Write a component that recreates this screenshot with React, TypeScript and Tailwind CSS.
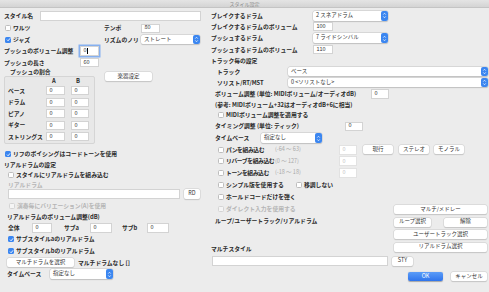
import clsx from "clsx";
import type { ReactNode } from "react";

const FONT = '"Noto Sans CJK JP", "Noto Sans", sans-serif';

function L({ children, dim, className }: { children: ReactNode; dim?: boolean; className?: string }) {
  return (
    <span
      className={clsx(
        "text-[5.8px] leading-none font-semibold whitespace-nowrap",
        dim ? "text-[#b5b5b5]" : "text-[#2a2a2a]",
        className
      )}
    >
      {children}
    </span>
  );
}

function Check({ on, dim }: { on?: boolean; dim?: boolean }) {
  return (
    <span
      className={clsx(
        "w-[6px] h-[6px] rounded-[1.5px] flex items-center justify-center shrink-0",
        on ? "bg-[#3b86f0]" : "bg-white border border-[#bdbdbd]",
        dim && "opacity-50"
      )}
    >
      {on && (
        <svg viewBox="0 0 10 10" className="w-[5px] h-[5px]">
          <path d="M2 5.3 L4.2 7.5 L8.2 2.6" stroke="white" strokeWidth="1.8" fill="none" />
        </svg>
      )}
    </span>
  );
}

function Field({ value, className, dim, focus }: { value?: string; className?: string; dim?: boolean; focus?: boolean }) {
  return (
    <div
      className={clsx(
        "h-[9px] bg-white border flex items-center px-[2.5px] text-[5.5px] leading-none shrink-0",
        dim ? "border-[#e2e2e2] text-[#c4c4c4]" : "border-[#d3d3d3] text-[#333]",
        focus && "shadow-[0_0_0_1.5px_#86b0ef]",
        className
      )}
    >
      {value}
      {focus && <span className="w-[0.6px] h-[6px] bg-black" />}
    </div>
  );
}

function Select({ value, className }: { value: string; className?: string }) {
  return (
    <div
      className={clsx(
        "h-[9px] bg-white rounded-[2px] shadow-[0_0_0_0.5px_#c8c8c8,0_0.5px_1px_rgba(0,0,0,0.2)] flex items-center text-[5.5px] leading-none text-[#333] shrink-0",
        className
      )}
    >
      <span className="pl-[3px] flex-1 whitespace-nowrap">{value}</span>
      <span className="w-[7px] h-full bg-[#3b86f0] rounded-[2px] flex items-center justify-center">
        <svg viewBox="0 0 7 10" className="w-[7px] h-[9px]">
          <path d="M2.1 4 L3.5 2.5 L4.9 4 M2.1 6 L3.5 7.5 L4.9 6" stroke="white" strokeWidth="0.8" fill="none" />
        </svg>
      </span>
    </div>
  );
}

function Btn({ children, className, primary }: { children: ReactNode; className?: string; primary?: boolean }) {
  return (
    <div
      className={clsx(
        "h-[9px] rounded-[2px] flex items-center justify-center text-[5.5px] leading-none whitespace-nowrap shrink-0",
        primary
          ? "bg-gradient-to-b from-[#5b9cf8] to-[#2f74ec] text-white shadow-[0_0.5px_1px_rgba(0,0,0,0.3)]"
          : "bg-white text-[#333] shadow-[0_0_0_0.5px_#cfcfcf,0_0.5px_1px_rgba(0,0,0,0.2)]",
        className
      )}
    >
      {children}
    </div>
  );
}

function CheckRow({ label, on, dim, tight }: { label: string; on?: boolean; dim?: boolean; tight?: boolean }) {
  return (
    <div className="flex items-center gap-[2px]">
      <Check on={on} dim={dim} />
      <L dim={dim} className={tight ? "tracking-[-0.4px]" : undefined}>
        {label}
      </L>
    </div>
  );
}

export default function App() {
  const parts = [
    ["ベース", "0", "0"],
    ["ドラム", "0", "0"],
    ["ピアノ", "0", "0"],
    ["ギター", "0", "0"],
    ["ストリングス", "0", "0"],
  ];

  const fxRows = [
    { label: "パンを組み込む", hint: "(-64 〜 63)", buttons: true },
    { label: "リバーブを組み込む", hint: "(0 〜 127)" },
    { label: "トーンを組み込む", hint: "(-18 〜 18)" },
  ];

  return (
    <div className="w-[489px] h-[292px] bg-[#ececec] flex flex-col overflow-hidden" style={{ fontFamily: FONT }}>
      {/* title bar */}
      <div className="h-[8px] bg-gradient-to-b from-[#e4e4e4] to-[#d4d4d4] border-b border-[#c4c4c4] flex items-center justify-center shrink-0">
        <span className="text-[5px] leading-none text-[#8a8a8a]">スタイル設定</span>
      </div>

      <div className="flex flex-1">
        {/* left column */}
        <div className="w-[205px] flex flex-col pt-[2px]">
          <div className="h-[12px] flex items-center pl-[4px]">
            <L className="w-[36px]">スタイル名</L>
            <Field className="w-[161px] h-[10px]" />
          </div>

          <div className="h-[12px] flex items-center pl-[5px]">
            <div className="w-[99px]">
              <CheckRow label="ワルツ" />
            </div>
            <L className="w-[37px]">テンポ</L>
            <Field value="80" className="w-[19px]" />
          </div>

          <div className="h-[11px] flex items-center pl-[5px]">
            <div className="w-[99px]">
              <CheckRow label="ジャズ" on />
            </div>
            <L className="w-[37px]">リズムのノリ</L>
            <Select value="ストレート" className="w-[59px]" />
          </div>

          <div className="h-[12px] flex items-center pl-[4px]">
            <L className="w-[76px]">プッシュのボリューム調整</L>
            <Field value="0" focus className="w-[19px] h-[10px]" />
          </div>

          <div className="h-[11px] flex items-center pl-[4px]">
            <L className="w-[76px]">プッシュの長さ</L>
            <Field value="60" className="w-[19px]" />
          </div>

          {/* push ratio group */}
          <div className="h-[76px] flex pl-[4px]">
            <div className="w-[91px] flex flex-col">
              <div className="h-[8px] flex items-center pl-[6px]">
                <L className="text-[4.5px]">プッシュの割合</L>
              </div>
              <div className="h-[68px] border border-[#d5d5d5] rounded-[2px] bg-[#e8e8e8] flex flex-col">
                <div className="h-[8px] flex items-center pl-[3px]">
                  <span className="w-[44px]" />
                  <L className="w-[24px] text-[4.5px]">A</L>
                  <L className="text-[4.5px]">B</L>
                </div>
                {parts.map(([name, a, b]) => (
                  <div key={name} className="h-[11.5px] flex items-center pl-[3px]">
                    <L className="w-[38px]">{name}</L>
                    <Field value={a} className="w-[19px]" />
                    <Field value={b} className="w-[18px] ml-[6px]" />
                  </div>
                ))}
              </div>
            </div>
            <Btn className="w-[47px] ml-[10px] mt-[4px]">楽器設定</Btn>
          </div>

          <div className="h-[12px] mt-[4px] flex items-center pl-[5px]">
            <CheckRow label="リフのボイシングはコードトーンを使用" on />
          </div>
          <div className="h-[10px] flex items-center pl-[4px]">
            <L>リアルドラムの設定</L>
          </div>
          <div className="h-[10px] flex items-center pl-[8px]">
            <CheckRow label="スタイルにリアルドラムを組み込む" />
          </div>
          <div className="h-[9px] flex items-center pl-[8px]">
            <L dim className="font-normal">リアルドラム</L>
          </div>
          <div className="h-[10px] flex items-center pl-[8px]">
            <Field className="w-[172px] h-[10px]" />
            <Btn className="w-[16px] h-[10px] ml-[4px]">RD</Btn>
          </div>
          <div className="h-[13px] flex items-center pl-[9px]">
            <CheckRow label="演奏毎にバリエーション(A)を使用" dim />
          </div>
          <div className="h-[10px] flex items-center pl-[7px]">
            <L>リアルドラムのボリューム調整(dB)</L>
          </div>
          <div className="h-[11px] flex items-center pl-[8px]">
            <L className="w-[24px]">全体</L>
            <Field value="0" className="w-[20px] h-[10px]" />
            <L className="w-[26px] ml-[12px]">サブa</L>
            <Field value="0" className="w-[22px] h-[10px]" />
            <L className="w-[25px] ml-[10px]">サブb</L>
            <Field value="0" className="w-[22px] h-[10px]" />
          </div>
          <div className="h-[12px] flex items-center pl-[8px]">
            <CheckRow label="サブスタイルaのリアルドラム" on />
          </div>
          <div className="h-[12px] flex items-center pl-[8px]">
            <CheckRow label="サブスタイルbのリアルドラム" on />
          </div>
          <div className="h-[11px] flex items-center pl-[7px]">
            <Btn className="w-[67px]">マルチドラムを選択</Btn>
            <L className="ml-[4px]">マルチドラムなし []</L>
          </div>
          <div className="h-[12px] flex items-center pl-[7px]">
            <L className="w-[43px]">タイムベース</L>
            <Select value="指定なし" className="w-[63px] h-[10px]" />
          </div>
        </div>

        {/* right column */}
        <div className="w-[284px] flex flex-col pt-[2px] pl-[6px]">
          <div className="h-[11px] flex items-center">
            <L className="w-[102px]">ブレイクするドラム</L>
            <Select value="2 スネアドラム" className="w-[75px] h-[10px]" />
          </div>
          <div className="h-[11px] flex items-center">
            <L className="w-[102px]">ブレイクするドラムのボリューム</L>
            <Field value="100" className="w-[20px]" />
          </div>
          <div className="h-[12px] flex items-center">
            <L className="w-[102px]">プッシュするドラム</L>
            <Select value="7 ライドシンバル" className="w-[75px] h-[10px]" />
          </div>
          <div className="h-[11px] flex items-center">
            <L className="w-[102px]">プッシュするドラムのボリューム</L>
            <Field value="110" className="w-[20px]" />
          </div>
          <div className="h-[11px] flex items-center">
            <L>トラック毎の設定</L>
          </div>
          <div className="h-[11px] flex items-center pl-[6px]">
            <L className="w-[71px]">トラック</L>
            <Select value="ベース" className="w-[200px]" />
          </div>
          <div className="h-[11px] flex items-center pl-[6px]">
            <L className="w-[71px]">ソリスト/RT/MST</L>
            <Select value="0 <ソリストなし>" className="w-[200px]" />
          </div>
          <div className="h-[12px] flex items-center pl-[4px]">
            <L className="w-[156px]">ボリューム調整 (単位: MIDIボリューム/オーディオdB)</L>
            <Field value="0" className="w-[18px] h-[10px]" />
          </div>
          <div className="h-[9px] flex items-center pl-[4px]">
            <L>(参考: MIDIボリューム+32はオーディオdB+6に相当)</L>
          </div>
          <div className="h-[11px] flex items-center pl-[7px]">
            <CheckRow label="MIDIボリューム調整を適用する" />
          </div>
          <div className="h-[12px] flex items-center pl-[4px]">
            <L className="w-[130px]">タイミング調整 (単位: ティック)</L>
            <Field value="0" className="w-[18px]" />
          </div>
          <div className="h-[12px] flex items-center pl-[4px]">
            <L className="w-[46px]">タイムベース</L>
            <Select value="指定なし" className="w-[61px] h-[10px]" />
          </div>

          {fxRows.map((r) => (
            <div key={r.label} className="h-[11.5px] flex items-center pl-[7px]">
              <div className="w-[57px]">
                <CheckRow label={r.label} tight />
              </div>
              <span className="w-[64px] text-[5.5px] leading-none text-[#a9a9a9] whitespace-nowrap">{r.hint}</span>
              <Field value="0" dim className="w-[18px] h-[10px]" />
              {r.buttons && (
                <>
                  <Btn className="w-[30px] ml-[6px]">現行</Btn>
                  <Btn className="w-[30px] ml-[6px]">ステレオ</Btn>
                  <Btn className="w-[30px] ml-[5px]">モノラル</Btn>
                </>
              )}
            </div>
          ))}

          <div className="h-[12px] flex items-center pl-[7px]">
            <div className="w-[78px]">
              <CheckRow label="シンプル版を使用する" />
            </div>
            <CheckRow label="移調しない" />
          </div>

          <div className="flex">
            <div className="flex flex-col flex-1">
              <div className="h-[12px] flex items-center pl-[7px]">
                <CheckRow label="ホールドコードだけを弾く" />
              </div>
              <div className="h-[12px] flex items-center pl-[7px]">
                <CheckRow label="ダイレクト入力を使用する" dim />
              </div>
              <div className="h-[12px] flex items-center pl-[4px]">
                <L>ループ/ユーザートラック/リアルドラム</L>
              </div>
              <div className="h-[10px] mt-[17.5px] flex items-center">
                <L>マルチスタイル</L>
              </div>
            </div>
            <div className="w-[93px] mr-[2px] pt-[14.5px] flex flex-col gap-[3.5px]">
              <Btn className="w-full">マルチ/メドレー</Btn>
              <div className="flex justify-between">
                <Btn className="w-[37px]">ループ選択</Btn>
                <Btn className="w-[43px]">解除</Btn>
              </div>
              <Btn className="w-full">ユーザートラック選択</Btn>
              <Btn className="w-full">リアルドラム選択</Btn>
            </div>
          </div>

          <div className="h-[10px] mt-[2px] flex items-center">
            <Field className="w-[176px] h-[10px] ml-[1px]" />
            <Btn className="w-[21px] ml-[4px]">STY</Btn>
          </div>

          <div className="h-[9px] mt-[6px] flex items-center justify-end mr-[2px]">
            <Btn primary className="w-[35px]">OK</Btn>
            <Btn className="w-[36px] ml-[8px]">キャンセル</Btn>
          </div>
        </div>
      </div>
    </div>
  );
}
